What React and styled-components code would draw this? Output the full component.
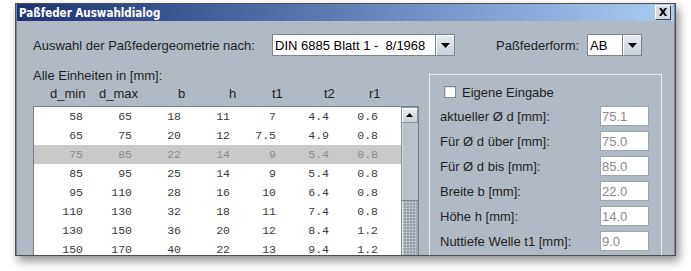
import React from "react";
import styled, { createGlobalStyle } from "styled-components";

const Global = createGlobalStyle`
  html, body { margin: 0; padding: 0; background: #ffffff; }
  body { font-family: "Liberation Sans", Arial, sans-serif; }
  #root { width: 691px; height: 271px; overflow: hidden; }
`;

const Page = styled.div`
  padding: 3px 0 0 15px;
`;

const Window = styled.div`
  width: 661px;
  height: 253px;
  box-sizing: border-box;
  border: 1px solid #4e4e4e;
  padding: 0 1px 0 1px;
  background: #7d8690;
  box-shadow: 3px 5px 9px rgba(0, 0, 0, 0.45);
  display: flex;
  flex-direction: column;
  overflow: hidden;
`;

const TitleBar = styled.div`
  height: 17px;
  flex: none;
  display: flex;
  align-items: center;
  justify-content: space-between;
  padding: 0 2px 0 2px;
  background: linear-gradient(90deg, #1b3373 0%, #4a67a3 35%, #7f9fcf 70%, #a9ccf2 100%);
`;

const Title = styled.span`
  color: #ffffff;
  font-family: "DejaVu Sans Condensed", "DejaVu Sans", sans-serif;
  font-weight: bold;
  font-size: 11.5px;
`;

const CloseButton = styled.div`
  width: 14px;
  height: 13px;
  margin-right: 1px;
  background: #d9dde2;
  border: 1px solid;
  border-color: #ffffff #3c3c3c #3c3c3c #ffffff;
  display: flex;
  align-items: center;
  justify-content: center;
  font-family: "DejaVu Sans", sans-serif;
  font-weight: bold;
  font-size: 11px;
  line-height: 1;
  color: #000;
`;

const Content = styled.div`
  flex: 1;
  background: #b1bac4;
  padding: 13px 0 0 16px;
  overflow: hidden;
  color: #1e1e1e;
  font-size: 13px;
`;

const TopRow = styled.div`
  display: flex;
  align-items: center;
  height: 22px;
`;

const Label = styled.span`
  width: ${(p) => p.$w || "auto"};
  margin-left: ${(p) => p.$ml || "0"};
  flex: none;
  white-space: nowrap;
`;

const Combo = styled.div`
  display: flex;
  width: ${(p) => p.$w};
  height: 22px;
  box-sizing: border-box;
  border: 1px solid #7a8591;
  background: #ffffff;
  flex: none;
`;

const ComboText = styled.div`
  flex: 1;
  padding-left: 2px;
  display: flex;
  align-items: center;
  color: #000;
  white-space: nowrap;
  overflow: hidden;
`;

const ArrowButton = styled.div`
  width: 19px;
  flex: none;
  box-sizing: border-box;
  border-left: 1px solid #7a8591;
  background: linear-gradient(180deg, #e9edf2 0%, #c9d0d8 100%);
  box-shadow: inset 1px 1px 0 #ffffff;
  display: flex;
  align-items: center;
  justify-content: center;
`;

const Main = styled.div`
  display: flex;
  gap: 10px;
  margin-top: 10px;
`;

const LeftCol = styled.div`
  width: 386px;
  flex: none;
  display: flex;
  flex-direction: column;
`;

const UnitsLabel = styled.div`
  height: 19px;
  line-height: 19px;
`;

const HeaderRow = styled.div`
  display: grid;
  grid-template-columns: 49px 79px 51px 43px 52px 45px auto;
  padding-left: 17px;
  height: 18px;
  line-height: 18px;
`;

const Table = styled.div`
  margin-top: 3px;
  height: 160px;
  border: 1px solid #76808b;
  border-bottom: none;
  background: #ffffff;
  display: flex;
`;

const Rows = styled.div`
  flex: 1;
  display: flex;
  flex-direction: column;
`;

const Row = styled.div`
  display: grid;
  grid-template-columns: 49px 49px 49px 49px 46px 53px 49px;
  height: 19px;
  align-items: center;
  background: ${(p) => (p.$sel ? "#c9c9c9" : "transparent")};
  color: ${(p) => (p.$sel ? "#8a8a8a" : "#3a3a3a")};
  font-family: "Liberation Mono", "Courier New", monospace;
  font-size: 11.5px;
`;

const Cell = styled.span`
  text-align: right;
`;

const ScrollBar = styled.div`
  width: 16px;
  flex: none;
  display: flex;
  flex-direction: column;
  background: #b9c1cb;
  border-left: 1px solid #8d96a0;
`;

const ScrollUp = styled.div`
  height: 16px;
  box-sizing: border-box;
  border: 1px solid #8d96a0;
  border-left: none;
  background: linear-gradient(180deg, #eef1f4 0%, #c6cdd5 100%);
  box-shadow: inset 1px 1px 0 #ffffff;
  display: flex;
  align-items: center;
  justify-content: center;
`;

const Track = styled.div`
  height: 77px;
  box-shadow: inset 1px 0 0 #d2d8de;
`;

const Thumb = styled.div`
  flex: 1;
  border-top: 1px solid #7e8791;
  background-color: #a6aeb8;
  background-image: radial-gradient(circle, #dfe4e9 0.7px, transparent 0.9px),
    radial-gradient(circle, #7b838d 0.7px, transparent 0.9px);
  background-size: 3px 3px, 3px 3px;
  background-position: 0 0, 1.5px 1.5px;
  box-shadow: inset 1px 0 0 #dde2e7;
`;

const Panel = styled.div`
  width: 233px;
  height: 190px;
  flex: none;
  box-sizing: border-box;
  margin-top: 8px;
  border: 1px solid #e6e9ed;
  border-bottom: none;
  padding: 6px 12px 0 10px;
  display: flex;
  flex-direction: column;
`;

const CheckRow = styled.label`
  height: 22px;
  display: flex;
  align-items: center;
  gap: 6px;
  margin-left: 4px;
  margin-bottom: 3px;
`;

const CheckBox = styled.span`
  width: 12px;
  height: 12px;
  box-sizing: border-box;
  border: 1px solid #7f8892;
  background: #ffffff;
  box-shadow: inset 1px 1px 0 #e0e0e0;
`;

const Fields = styled.div`
  display: flex;
  flex-direction: column;
  gap: 5px;
`;

const FieldRow = styled.div`
  display: flex;
  align-items: center;
  justify-content: space-between;
  height: 20px;
`;

const Field = styled.div`
  width: 49px;
  height: 20px;
  box-sizing: border-box;
  border: 1px solid #9ca5ae;
  background: #ffffff;
  color: #8a8a8a;
  padding-left: 1px;
  display: flex;
  align-items: center;
`;

const Triangle = () => (
  <svg width="9" height="5" viewBox="0 0 9 5">
    <polygon points="0,0 9,0 4.5,5" fill="#000" />
  </svg>
);

const UpTriangle = () => (
  <svg width="7" height="4" viewBox="0 0 7 4">
    <polygon points="0,4 7,4 3.5,0" fill="#000" />
  </svg>
);

const data = [
  ["58", "65", "18", "11", "7", "4.4", "0.6"],
  ["65", "75", "20", "12", "7.5", "4.9", "0.8"],
  ["75", "85", "22", "14", "9", "5.4", "0.8"],
  ["85", "95", "25", "14", "9", "5.4", "0.8"],
  ["95", "110", "28", "16", "10", "6.4", "0.8"],
  ["110", "130", "32", "18", "11", "7.4", "0.8"],
  ["130", "150", "36", "20", "12", "8.4", "1.2"],
  ["150", "170", "40", "22", "13", "9.4", "1.2"],
];

const fields = [
  ["aktueller Ø d [mm]:", "75.1"],
  ["Für Ø d über [mm]:", "75.0"],
  ["Für Ø d bis [mm]:", "85.0"],
  ["Breite b [mm]:", "22.0"],
  ["Höhe h [mm]:", "14.0"],
  ["Nuttiefe Welle t1  [mm]:", "9.0"],
];

export default function App() {
  return (
    <>
      <Global />
      <Page>
        <Window>
          <TitleBar>
            <Title>Paßfeder Auswahldialog</Title>
            <CloseButton>X</CloseButton>
          </TitleBar>
          <Content>
            <TopRow>
              <Label $w="239px">Auswahl der Paßfedergeometrie nach:</Label>
              <Combo $w="183px">
                <ComboText>DIN 6885 Blatt 1 -&nbsp; 8/1968</ComboText>
                <ArrowButton>
                  <Triangle />
                </ArrowButton>
              </Combo>
              <Label $ml="41px" $w="91px">Paßfederform:</Label>
              <Combo $w="55px">
                <ComboText>AB</ComboText>
                <ArrowButton>
                  <Triangle />
                </ArrowButton>
              </Combo>
            </TopRow>
            <Main>
              <LeftCol>
                <UnitsLabel>Alle Einheiten in [mm]:</UnitsLabel>
                <HeaderRow>
                  <span>d_min</span>
                  <span>d_max</span>
                  <span>b</span>
                  <span>h</span>
                  <span>t1</span>
                  <span>t2</span>
                  <span>r1</span>
                </HeaderRow>
                <Table>
                  <Rows>
                    {data.map((r, i) => (
                      <Row key={i} $sel={i === 2}>
                        {r.map((v, j) => (
                          <Cell key={j}>{v}</Cell>
                        ))}
                      </Row>
                    ))}
                  </Rows>
                  <ScrollBar>
                    <ScrollUp>
                      <UpTriangle />
                    </ScrollUp>
                    <Track />
                    <Thumb />
                  </ScrollBar>
                </Table>
              </LeftCol>
              <Panel>
                <CheckRow>
                  <CheckBox />
                  <span>Eigene Eingabe</span>
                </CheckRow>
                <Fields>
                  {fields.map(([l, v]) => (
                    <FieldRow key={l}>
                      <span>{l}</span>
                      <Field>{v}</Field>
                    </FieldRow>
                  ))}
                </Fields>
              </Panel>
            </Main>
          </Content>
        </Window>
      </Page>
    </>
  );
}
